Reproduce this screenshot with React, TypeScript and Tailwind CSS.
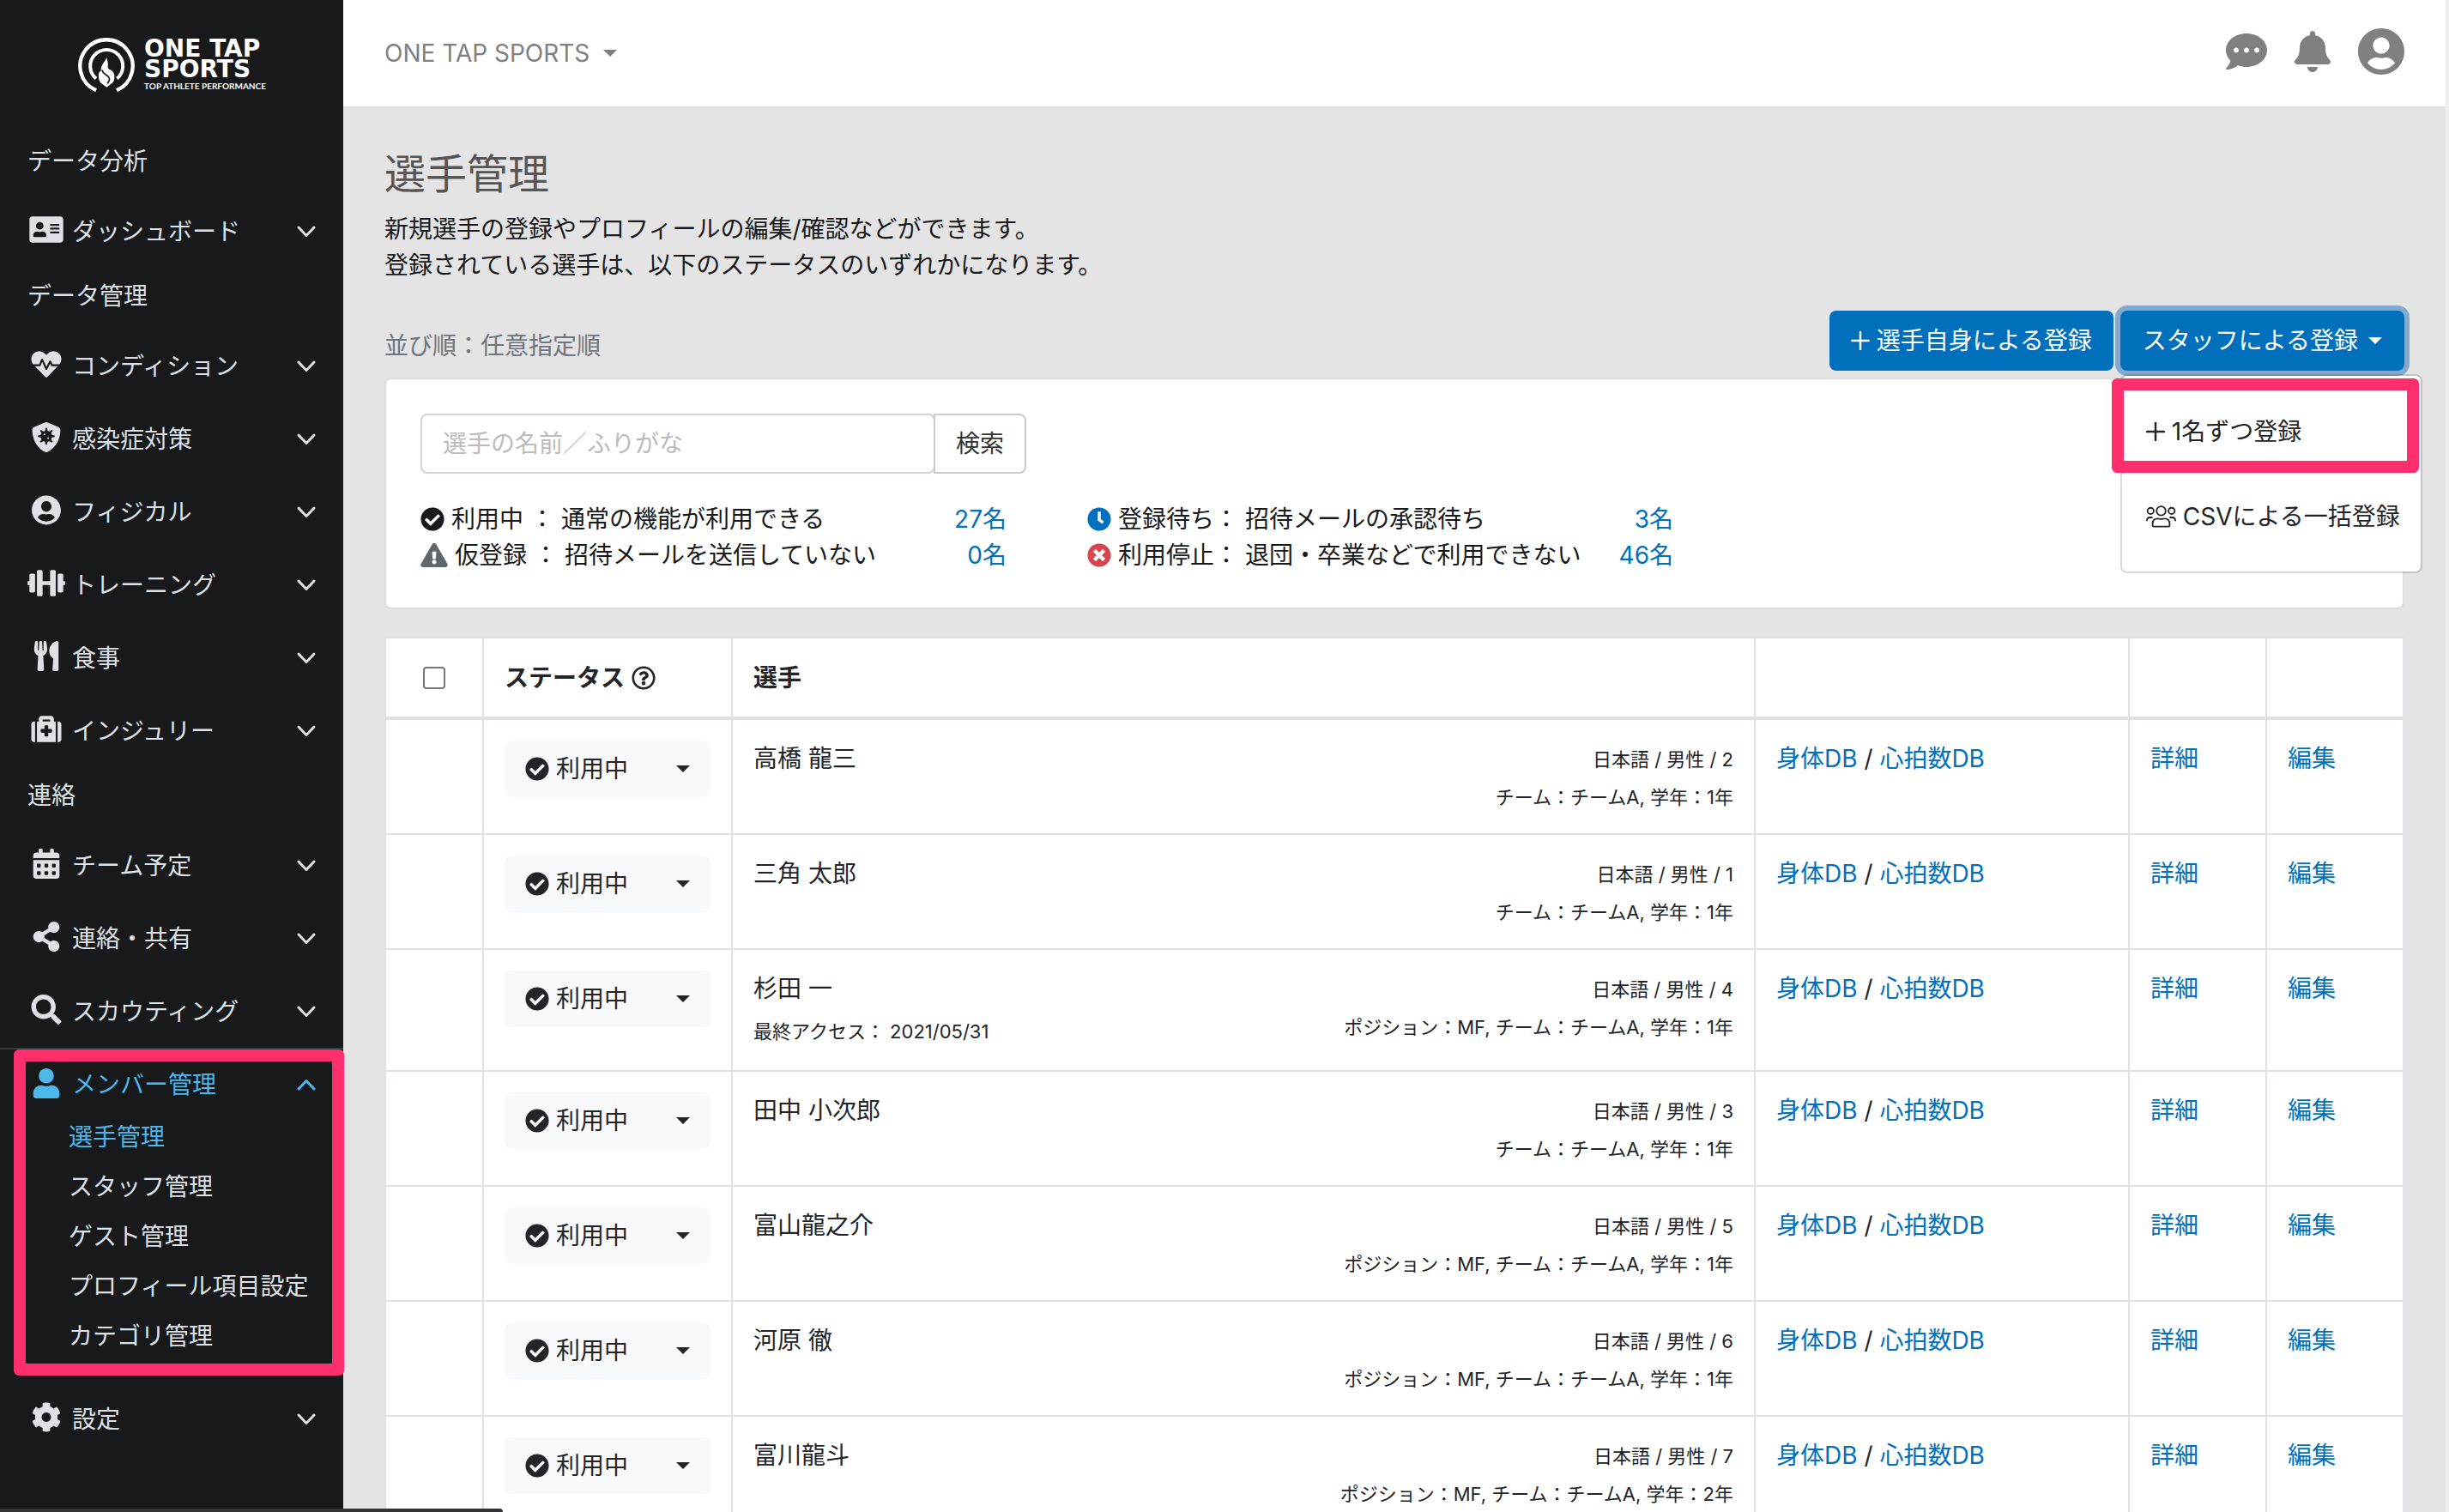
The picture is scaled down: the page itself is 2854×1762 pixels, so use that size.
import React from 'react';
import type { IconType } from 'react-icons';
import {
  FaAddressCard,
  FaBell,
  FaCalendarAlt,
  FaCheckCircle,
  FaClock,
  FaCog,
  FaCommentDots,
  FaDumbbell,
  FaExclamationTriangle,
  FaHeartbeat,
  FaMedkit,
  FaRegQuestionCircle,
  FaSearch,
  FaShareAlt,
  FaShieldVirus,
  FaTimesCircle,
  FaUser,
  FaUserCircle,
  FaUtensils,
} from 'react-icons/fa';

interface MenuItem {
  label: string;
  icon: IconType;
}

interface MenuSection {
  heading: string;
  items: MenuItem[];
}

interface Player {
  name: string;
  profile: string;
  groups: string;
  lastAccess?: string;
}

interface StatusCount {
  icon: IconType;
  iconClass: string;
  label: string;
  description: string;
  count: string;
}

const menuSections: MenuSection[] = [
  {
    heading: 'データ分析',
    items: [{ label: 'ダッシュボード', icon: FaAddressCard }],
  },
  {
    heading: 'データ管理',
    items: [
      { label: 'コンディション', icon: FaHeartbeat },
      { label: '感染症対策', icon: FaShieldVirus },
      { label: 'フィジカル', icon: FaUserCircle },
      { label: 'トレーニング', icon: FaDumbbell },
      { label: '食事', icon: FaUtensils },
      { label: 'インジュリー', icon: FaMedkit },
    ],
  },
  {
    heading: '連絡',
    items: [
      { label: 'チーム予定', icon: FaCalendarAlt },
      { label: '連絡・共有', icon: FaShareAlt },
      { label: 'スカウティング', icon: FaSearch },
    ],
  },
];

const memberLinks = ['選手管理', 'スタッフ管理', 'ゲスト管理', 'プロフィール項目設定', 'カテゴリ管理'];

const statusColumns: StatusCount[][] = [
  [
    { icon: FaCheckCircle, iconClass: 'w-7 text-[#17191b]', label: '利用中 ：', description: '通常の機能が利用できる', count: '27名' },
    { icon: FaExclamationTriangle, iconClass: 'w-8 text-[#5f666c]', label: '仮登録 ：', description: '招待メールを送信していない', count: '0名' },
  ],
  [
    { icon: FaClock, iconClass: 'w-7 text-[#0070bc]', label: '登録待ち：', description: '招待メールの承認待ち', count: '3名' },
    { icon: FaTimesCircle, iconClass: 'w-7 text-[#d6464f]', label: '利用停止：', description: '退団・卒業などで利用できない', count: '46名' },
  ],
];

const players: Player[] = [
  { name: '高橋 龍三', profile: '日本語 / 男性 / 2', groups: 'チーム：チームA, 学年：1年' },
  { name: '三角 太郎', profile: '日本語 / 男性 / 1', groups: 'チーム：チームA, 学年：1年' },
  { name: '杉田 一', profile: '日本語 / 男性 / 4', groups: 'ポジション：MF, チーム：チームA, 学年：1年', lastAccess: '2021/05/31' },
  { name: '田中 小次郎', profile: '日本語 / 男性 / 3', groups: 'チーム：チームA, 学年：1年' },
  { name: '富山龍之介', profile: '日本語 / 男性 / 5', groups: 'ポジション：MF, チーム：チームA, 学年：1年' },
  { name: '河原 徹', profile: '日本語 / 男性 / 6', groups: 'ポジション：MF, チーム：チームA, 学年：1年' },
  { name: '富川龍斗', profile: '日本語 / 男性 / 7', groups: 'ポジション：MF, チーム：チームA, 学年：2年' },
];

function Chevron({ up = false }: { up?: boolean }) {
  return (
    <svg viewBox="0 0 22 14" className="h-[14px] w-[22px] shrink-0" fill="none" stroke="currentColor" strokeWidth="3" strokeLinecap="round" strokeLinejoin="round">
      <path d={up ? 'M2 12 11 2.500 20 12' : 'M2 2 11 11.500 20 2'} />
    </svg>
  );
}

function Caret() {
  return (
    <svg viewBox="0 0 16 8" className="h-2 w-4 shrink-0" fill="currentColor">
      <path d="M0 0h16L8 8z" />
    </svg>
  );
}

function PlusIcon() {
  return (
    <svg viewBox="0 0 22 22" className="h-[22px] w-[22px] shrink-0" fill="none" stroke="currentColor" strokeWidth="2.500" strokeLinecap="round">
      <path d="M11 1v20M1 11h20" />
    </svg>
  );
}

function PeopleIcon() {
  return (
    <svg viewBox="0 0 106 78" className="h-[26px] w-[35px] shrink-0" fill="none" stroke="currentColor" strokeWidth="5.500" strokeLinecap="round">
      <circle cx="53" cy="19" r="16" />
      <circle cx="16" cy="19" r="11" />
      <circle cx="90" cy="19" r="11" />
      <path d="M27 74q-4 0-4-4v-5q0-19 18-19 4 0 12 2 8-2 12-2 18 0 18 19v5q0 4-4 4z" strokeLinejoin="round" />
      <path d="M3 53q0-11 11-11h7M85 42h7q11 0 11 11" />
    </svg>
  );
}

function Logo() {
  return (
    <a href="#" className="flex items-center gap-[10px] text-white">
      <svg viewBox="30 38 204 194" className="h-[65px] w-[68px] shrink-0" fill="none" stroke="currentColor">
        <path d="M96 224A92 92 0 1 1 168 224" strokeWidth="13" />
        <path d="M96 183A57 57 0 1 1 169 183" strokeWidth="12" />
        <path d="M133 110C136 124 139 128 137 142 136 150 146 152 154 158 163 168 161 190 154 197L133 214 112 198C104 188 104 178 105 166 107 160 110 158 113 157 112 136 126 124 133 110Z" fill="currentColor" stroke="none" />
        <path d="M117 153C119 168 133 168 140 178 145 186 141 194 135 200" stroke="#17191b" strokeWidth="5" />
      </svg>
      <span className="flex flex-col">
        <span className="font-['DejaVu_Sans',sans-serif] text-[28px] leading-6 font-bold">ONE TAP</span>
        <span className="font-['DejaVu_Sans',sans-serif] text-[28px] leading-6 font-bold">SPORTS</span>
        <span className="font-['Lato',sans-serif] text-[10px] leading-[14px] font-bold whitespace-nowrap">TOP ATHLETE PERFORMANCE</span>
      </span>
    </a>
  );
}

function MenuButton({ item }: { item: MenuItem }) {
  const Icon = item.icon;
  return (
    <button type="button" className="flex h-[85px] w-full items-center gap-2 px-8 text-left">
      <Icon className="mb-1 h-[35px] w-11 shrink-0" />
      <span className="grow">{item.label}</span>
      <Chevron />
    </button>
  );
}

function Sidebar() {
  return (
    <nav className="w-[400px] shrink-0 bg-[#17191b] text-[#dee2e6]">
      <div className="flex h-[155px] items-start justify-center pt-[43px]">
        <Logo />
      </div>
      {menuSections.map((section) => (
        <div key={section.heading}>
          <h2 className="px-8 pt-3 pb-[18px]">{section.heading}</h2>
          {section.items.map((item) => (
            <MenuButton key={item.label} item={item} />
          ))}
        </div>
      ))}

      {/* Opened group */}
      <div className="relative border-t-2 border-[#343a40] pt-1 pb-[30px]">
        <button type="button" className="flex h-[74px] w-full items-center gap-2 px-8 text-left text-[#4db8ec]">
          <FaUser className="mb-1 h-[35px] w-11 shrink-0" />
          <span className="grow">メンバー管理</span>
          <Chevron up />
        </button>
        <ul className="flex flex-col gap-[10px] pl-20">
          {memberLinks.map((label, index) => (
            <li key={label} className="h-12 leading-[48px]">
              <a href="#" className={index === 0 ? 'text-[#4db8ec]' : ''}>
                {label}
              </a>
            </li>
          ))}
        </ul>
        <div className="pointer-events-none absolute top-0 -right-px bottom-2 left-4 z-10 rounded-md border-[14px] border-[#ff2e6c]" />
      </div>
      <MenuButton item={{ label: '設定', icon: FaCog }} />
    </nav>
  );
}

function RegisterMenu() {
  return (
    <div className="absolute top-[74px] left-0 z-10 rounded-lg border-2 border-black/15 bg-white bg-clip-padding pt-[15px] pb-[15px] text-[#212529]">
      <a href="#" className="flex h-[99px] items-center gap-2 pr-6 pl-7 whitespace-nowrap">
        <PlusIcon />
        1名ずつ登録
      </a>
      <a href="#" className="flex h-[99px] items-center gap-2 pr-6 pl-7 whitespace-nowrap">
        <PeopleIcon />
        CSVによる一括登録
      </a>
      <div className="pointer-events-none absolute top-[3px] right-[2px] -left-3 h-[110px] rounded-md border-[14px] border-[#ff2e6c]" />
    </div>
  );
}

function StatusSummary() {
  return (
    <div className="flex gap-[94px]">
      {statusColumns.map((column, index) => (
        <div key={index} className="w-[683px]">
          {column.map(({ icon: Icon, iconClass, label, description, count }) => (
            <div key={label} className="flex items-center gap-2">
              <Icon className={`h-7 shrink-0 ${iconClass}`} />
              <span>{label}</span>
              <span className="grow">{description}</span>
              <a href="#" className="text-[#0070bc]">{count}</a>
            </div>
          ))}
        </div>
      ))}
    </div>
  );
}

function PlayerRow({ player }: { player: Player }) {
  return (
    <tr className="align-top">
      <td className="border-2 border-[#dee2e6]"></td>
      <td className="border-2 border-[#dee2e6] px-6 pt-6 pb-5">
        <button type="button" className="flex h-[66px] w-full items-center gap-2 rounded-lg bg-[#f8f9fa] px-6 text-left">
          <FaCheckCircle className="h-7 w-7 shrink-0" />
          <span className="grow">利用中</span>
          <Caret />
        </button>
      </td>
      <td className="border-2 border-[#dee2e6] px-6 pt-6 pb-5">
        <div className="flex justify-between">
          <div>
            <div>{player.name}</div>
            {player.lastAccess && (
              <div className="mt-2 mb-1 text-[22px]">最終アクセス： {player.lastAccess}</div>
            )}
          </div>
          <div className="text-right text-[22px] leading-[44px]">
            <div>{player.profile}</div>
            <div>{player.groups}</div>
          </div>
        </div>
      </td>
      <td className="border-2 border-[#dee2e6] px-6 pt-6 pb-5">
        <a href="#" className="text-[#0070bc]">身体DB</a> / <a href="#" className="text-[#0070bc]">心拍数DB</a>
      </td>
      <td className="border-2 border-[#dee2e6] px-6 pt-6 pb-5">
        <a href="#" className="text-[#0070bc]">詳細</a>
      </td>
      <td className="border-2 border-[#dee2e6] px-6 pt-6 pb-5">
        <a href="#" className="text-[#0070bc]">編集</a>
      </td>
    </tr>
  );
}

export default function App() {
  return (
    <div className="relative flex h-screen overflow-hidden border-r-4 border-[#eeeeee] bg-[#e4e4e4] font-['Inter','Noto_Sans_CJK_JP',sans-serif] text-[28px] leading-[42px] text-[#17191b]">
      <Sidebar />

      <div className="min-w-0 grow">
        <header className="flex h-[126px] items-center justify-between border-b-2 border-[#dee2e6] bg-white px-12 text-[#808080]">
          <button type="button" className="flex items-center gap-4">
            ONE TAP SPORTS
            <Caret />
          </button>
          <div className="flex items-center gap-8 pb-1">
            <button type="button" aria-label="メッセージ"><FaCommentDots className="h-12 w-12" /></button>
            <button type="button" aria-label="お知らせ"><FaBell className="h-12 w-[42px]" /></button>
            <button type="button" aria-label="アカウント"><FaUserCircle className="h-14 w-[54px]" /></button>
          </div>
        </header>

        <main className="px-12 pt-12">
          <h1 className="text-[48px] leading-[58px] text-[#555555]">選手管理</h1>
          <p className="mt-[14px]">
            新規選手の登録やプロフィールの編集/確認などができます。
            <br />
            登録されている選手は、以下のステータスのいずれかになります。
          </p>

          <div className="mt-8 flex items-start justify-between">
            <p className="mt-5 text-[#6c757d]">並び順：任意指定順</p>
            <div className="flex gap-2">
              <button type="button" className="flex h-[70px] items-center gap-2 rounded-lg bg-[#0070bc] px-[25px] text-white">
                <PlusIcon />
                選手自身による登録
              </button>
              <div className="relative">
                <button type="button" className="flex h-[70px] items-center gap-3 rounded-lg bg-[#0070bc] px-[26px] text-white ring-[6px] ring-[#82a9d0]">
                  スタッフによる登録
                  <Caret />
                </button>
                <RegisterMenu />
              </div>
            </div>
          </div>

          {/* Search and status summary */}
          <section className="mt-2 rounded-lg border-2 border-[#dedede] bg-white p-10">
            <form className="mb-8 flex">
              <input
                type="text"
                aria-label="選手の名前／ふりがな"
                placeholder="選手の名前／ふりがな"
                className="h-[70px] w-[600px] rounded-lg border-2 border-[#ced4da] px-6 placeholder:text-[#bbbbbb]"
              />
              <button type="button" className="-ml-0.5 h-[70px] rounded-r-lg border-2 border-[#cccccc] px-6 text-[#333333]">検索</button>
            </form>
            <StatusSummary />
          </section>

          <table className="mt-8 w-full table-fixed border-collapse bg-white text-[#212529]">
            <colgroup>
              <col className="w-[114px]" />
              <col className="w-[290px]" />
              <col />
              <col className="w-[436px]" />
              <col className="w-[160px]" />
              <col className="w-[160px]" />
            </colgroup>
            <thead>
              <tr className="h-[94px] text-left">
                <th className="border-2 border-b-4 border-[#dee2e6] text-center">
                  <input type="checkbox" aria-label="すべて選択" className="mx-auto block h-[26px] w-[26px] appearance-none rounded border-2 border-[#767676] bg-white" />
                </th>
                <th className="border-2 border-b-4 border-[#dee2e6] px-6 font-bold">
                  <span className="flex items-center gap-2">
                    ステータス
                    <FaRegQuestionCircle className="h-7 w-7" />
                  </span>
                </th>
                <th className="border-2 border-b-4 border-[#dee2e6] px-6 font-bold">選手</th>
                <th className="border-2 border-b-4 border-[#dee2e6]"></th>
                <th className="border-2 border-b-4 border-[#dee2e6]"></th>
                <th className="border-2 border-b-4 border-[#dee2e6]"></th>
              </tr>
            </thead>
            <tbody>
              {players.map((player) => (
                <PlayerRow key={player.name} player={player} />
              ))}
            </tbody>
          </table>
        </main>
      </div>

      {/* Browser status strip along the bottom edge */}
      <div className="absolute bottom-0 left-0 h-1 w-[586px] rounded-tr bg-[#333437]" />
    </div>
  );
}
